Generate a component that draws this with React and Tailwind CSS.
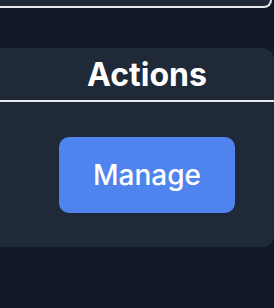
export default function App() {
  return (
    <div className="w-[274px] h-[308px] bg-[#111827] overflow-hidden" style={{ fontFamily: "Inter, 'Liberation Sans', sans-serif" }}>
      <div className="h-[8px] w-[272px] bg-[#1f2937] border-b-2 border-r-2 border-[#e5e7eb] rounded-br-xl" />
      <div className="mt-[40px] w-[274px] h-[199px] bg-[#1f2937] rounded-r-xl flex flex-col">
        <div className="h-[52px] flex items-center justify-center pl-[20px] text-white font-bold text-[32px] leading-none pt-[2px]">
          Actions
        </div>
        <div className="h-[2px] bg-[#e5e7eb]" />
        <div className="flex-1 flex justify-center pl-[20px] pt-[35px]">
          <button className="w-[176px] h-[76px] rounded-[10px] bg-[#4f83ed] text-white text-[28px] font-medium flex items-center justify-center">
            Manage
          </button>
        </div>
      </div>
    </div>
  );
}
